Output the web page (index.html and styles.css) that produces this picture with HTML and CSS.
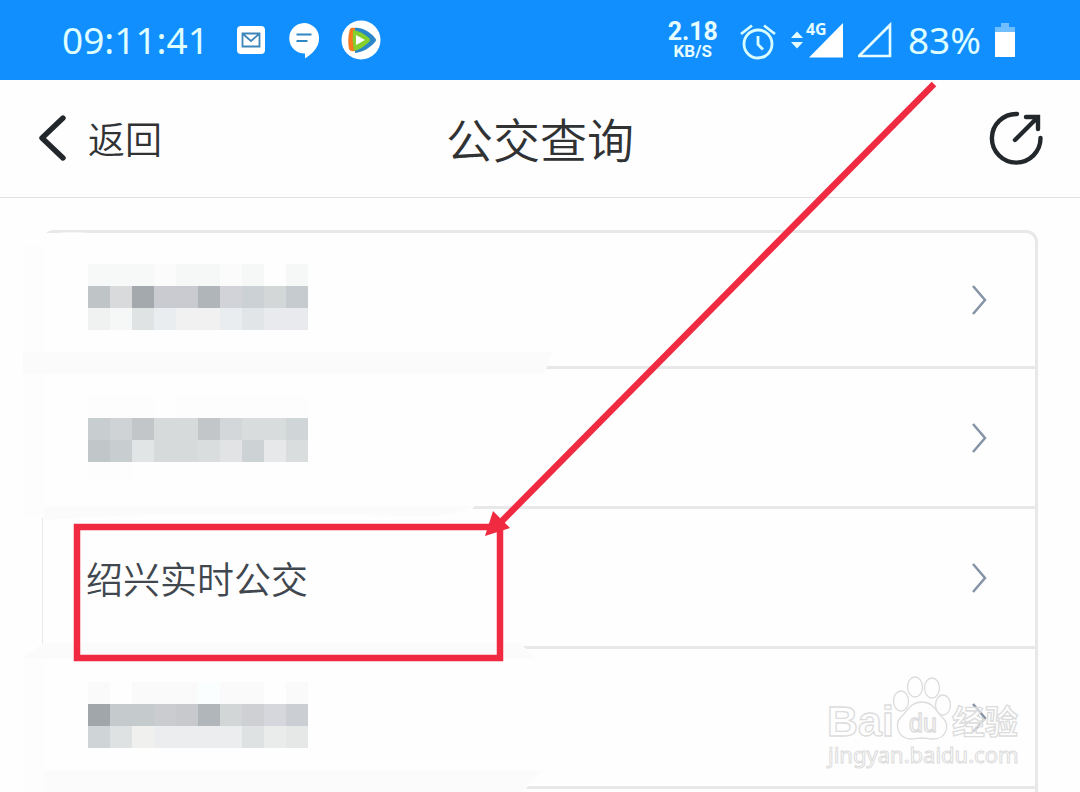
FILE: index.html
```html
<!DOCTYPE html>
<html lang="zh-CN">
<head>
  <meta charset="UTF-8">
  <meta name="viewport" content="width=device-width, initial-scale=1.0">
  <title>公交查询</title>
  <link rel="stylesheet" href="styles.css">
</head>
<body>

  <div class="page">
    <!-- Status bar -->
    <div class="status-bar">
      <div class="status-group">
        <span class="status-text">09:11:41</span>
        <div class="status-icons">
          <svg width="28" height="28" viewBox="0 0 28 28">
            <rect width="28" height="28" rx="4" fill="#fff"/>
            <path d="M5.500 7.500h17v13h-17zM6 8l8 7 8-7" fill="none" stroke="#3f86b8" stroke-width="1.800"/>
          </svg>
          <svg width="32" height="38" viewBox="0 0 32 38">
            <path d="M17 2a15 15 0 0 1 15 15.500c0 8-5 14-14 20V32.500A15 15 0 0 1 17 2z" fill="#fff"/>
            <path d="M9.500 13.500h15M9.500 20h11" stroke="#2f86c4" stroke-width="2.200"/>
          </svg>
          <svg width="40" height="40" viewBox="0 0 40 40">
            <circle cx="20" cy="20" r="19.500" fill="#fff"/>
            <path d="M13 8c8-1 16 4 21 10q2 2 0 4c-5 6-12 10-20 11z" fill="#2a86c6"/>
            <path d="M9 9q1-2 5-1v23q-5 1-6-2-2-10 1-20z" fill="#f47a20"/>
            <path d="M12 10q8 1 16 8 2 2 0 4-7 7-15 9-2-10-1-21z" fill="#84cf2b"/>
            <path d="M15 15l9 5-9 5z" fill="#fff"/>
          </svg>
        </div>
      </div>
      <div class="status-group status-right">
        <div class="speed">
          <span class="speed-value">2.18</span>
          <span class="speed-unit">KB/S</span>
        </div>
        <svg width="36" height="40" viewBox="0 0 36 40" fill="none" stroke="#d8fdff" stroke-width="2.800">
          <circle cx="18" cy="24" r="14"/>
          <path d="M18 16v8.500l5 5M1 14L12 5.500M24 5.500L35 14"/>
        </svg>
        <div class="network">
          <svg width="54" height="40" viewBox="0 0 54 40">
            <path d="M1 18l6-6.500 6 6.500zM1 22h12l-6 6.500z" fill="#e6fdff"/>
            <path d="M19 37.500L53 3v34.500z" fill="#fff"/>
          </svg>
          <span class="network-type">4G</span>
        </div>
        <svg width="36" height="40" viewBox="0 0 36 40">
          <path d="M1 36L32 5v31z" fill="none" stroke="#e6fdff" stroke-width="2.600"/>
        </svg>
        <span class="status-text">83%</span>
        <svg width="20" height="36" viewBox="0 0 20 36">
          <path d="M6 1h8v4h6v5H0V5h6z" fill="#70bdff"/>
          <path d="M0 10h20v25H0z" fill="#fff"/>
        </svg>
      </div>
    </div>

    <!-- Title bar -->
    <header class="header">
      <a class="back" href="#">
        <svg width="30" height="46" viewBox="0 0 30 46">
          <path d="M27 3L6 23l21 20" fill="none" stroke="#22272c" stroke-width="5.400" stroke-linecap="round" stroke-linejoin="round"/>
        </svg>
        返回
      </a>
      <h1>公交查询</h1>
      <button class="share" type="button" aria-label="分享">
        <svg width="56" height="56" viewBox="0 0 56 56" fill="none" stroke="#22272c" stroke-width="4.400" stroke-linecap="round" stroke-linejoin="round">
          <path d="M29 4A24.300 24.300 0 1 0 52.500 28"/>
          <path d="M27 30L49 8M38 7h12v12" stroke-linejoin="miter"/>
        </svg>
      </button>
    </header>

    <!-- Route list -->
    <main class="content">
      <nav class="routes">
        <a class="route" href="#">
          <svg class="mosaic" width="220" height="72" viewBox="0 0 220 72" shape-rendering="crispEdges">
            <path d="M0 0h66v22H0z" fill="#f7f8f8"/>
            <path d="M66 0h22v22H66zM132 0h22v22h-22z" fill="#fbfbfb"/>
            <path d="M88 0h22v22H88z" fill="#f5f8f7"/>
            <path d="M110 0h22v22h-22zM154 0h22v22h-22zM198 0h22v22h-22z" fill="#f6f7f7"/>
            <path d="M0 22h22v22H0z" fill="#bfc4c6"/>
            <path d="M22 22h22v22H22z" fill="#d8dadc"/>
            <path d="M44 22h22v22H44z" fill="#a4a9ad"/>
            <path d="M66 22h44v22H66z" fill="#cacbd0"/>
            <path d="M110 22h22v22h-22z" fill="#afb5b9"/>
            <path d="M132 22h22v22h-22z" fill="#d1d3d8"/>
            <path d="M154 22h22v22h-22z" fill="#cbd1d5"/>
            <path d="M176 22h22v22h-22z" fill="#d4d7d8"/>
            <path d="M198 22h22v22h-22z" fill="#c6cbcf"/>
            <path d="M0 44h22v22H0z" fill="#eff2f1"/>
            <path d="M22 44h22v22H22z" fill="#f6f7f7"/>
            <path d="M44 44h22v22H44z" fill="#e0e3e4"/>
            <path d="M66 44h22v22H66zM132 44h22v22h-22z" fill="#e9edef"/>
            <path d="M88 44h44v22H88z" fill="#f1f1f2"/>
            <path d="M154 44h22v22h-22z" fill="#e2e5e8"/>
            <path d="M176 44h44v22h-44z" fill="#e8eaed"/>
          </svg>
          <svg class="chevron" width="18" height="32" viewBox="0 0 18 32"><path d="M3 2l12 14L3 30"/></svg>
        </a>
        <a class="route" href="#">
          <svg class="mosaic" width="220" height="84" viewBox="0 0 220 84" shape-rendering="crispEdges">
            <path d="M0 0h66v22H0zM88 0h132v22H88zM0 66h44v18H0z" fill="#fdfdfd"/>
            <path d="M0 22h22v22H0z" fill="#c8cdcf"/>
            <path d="M22 22h22v22H22z" fill="#d0d3d6"/>
            <path d="M44 22h22v22H44zM110 22h22v22h-22z" fill="#c2c6c8"/>
            <path d="M66 22h44v44H66z" fill="#d7dadb"/>
            <path d="M132 22h22v22h-22z" fill="#d3d7d9"/>
            <path d="M154 22h44v22h-44z" fill="#d9dcdd"/>
            <path d="M198 22h22v22h-22z" fill="#d0d5d8"/>
            <path d="M0 44h22v22H0z" fill="#c1c6c8"/>
            <path d="M22 44h22v22H22z" fill="#c8cdcf"/>
            <path d="M44 44h22v22H44z" fill="#e2e5e5"/>
            <path d="M110 44h22v22h-22zM198 44h22v22h-22z" fill="#dadddd"/>
            <path d="M132 44h22v22h-22z" fill="#e1e3e4"/>
            <path d="M154 44h22v22h-22z" fill="#cdd3d5"/>
            <path d="M176 44h22v22h-22z" fill="#e6e8e9"/>
          </svg>
          <svg class="chevron" width="18" height="32" viewBox="0 0 18 32"><path d="M3 2l12 14L3 30"/></svg>
        </a>
        <a class="route" href="#">
          <span class="route-name">绍兴实时公交</span>
          <svg class="chevron" width="18" height="32" viewBox="0 0 18 32"><path d="M3 2l12 14L3 30"/></svg>
        </a>
        <a class="route" href="#">
          <svg class="mosaic" width="220" height="72" viewBox="0 0 220 72" shape-rendering="crispEdges">
            <path d="M0 0h22v22H0zM44 0h66v22H44zM132 0h44v22h-44zM198 0h22v22h-22z" fill="#fafafa"/>
            <path d="M110 0h22v22h-22z" fill="#fafefe"/>
            <path d="M0 22h22v22H0z" fill="#a0a6a9"/>
            <path d="M22 22h44v22H22z" fill="#c5cacd"/>
            <path d="M66 22h22v22H66z" fill="#cbccd0"/>
            <path d="M88 22h22v22H88z" fill="#c7c9cc"/>
            <path d="M110 22h22v22h-22z" fill="#b0b6ba"/>
            <path d="M132 22h22v22h-22z" fill="#d3d6d7"/>
            <path d="M154 22h22v22h-22z" fill="#cfd0d4"/>
            <path d="M176 22h22v22h-22z" fill="#d5d7dc"/>
            <path d="M198 22h22v22h-22z" fill="#cbced2"/>
            <path d="M0 44h22v22H0z" fill="#cfd4d7"/>
            <path d="M22 44h22v22H22zM154 44h22v22h-22z" fill="#dfe2e3"/>
            <path d="M44 44h22v22H44z" fill="#f0f1ef"/>
            <path d="M66 44h88v22H66z" fill="#ebedee"/>
            <path d="M176 44h22v22h-22z" fill="#eaecec"/>
            <path d="M198 44h22v22h-22z" fill="#e6e8e8"/>
          </svg>
          <svg class="chevron" width="18" height="32" viewBox="0 0 18 32"><path d="M3 2l12 14L3 30"/></svg>
          <svg class="watermark" width="200" height="100" viewBox="0 0 200 100">
            <g fill="#fefefe" stroke="#dcdcdc" stroke-width="1.300">
              <ellipse cx="76" cy="27" rx="7.500" ry="10"/>
              <ellipse cx="90" cy="13" rx="7.500" ry="10"/>
              <ellipse cx="107" cy="14" rx="7.500" ry="10"/>
              <ellipse cx="118" cy="31" rx="7.500" ry="10"/>
              <path d="M97 28c-12 0-14 9-21 15-7 7-3 22 10 22 5 0 7-1 11-1s6 1 11 1c14 0 17-14 10-21-7-6-9-16-21-16z"/>
              <text class="mark-bai" x="2" y="62">Bai</text>
              <text class="mark-du" x="84" y="58">du</text>
              <text class="mark-cn" x="127" y="60" fill-opacity="0.600">经验</text>
              <text class="mark-url" x="3" y="89" stroke-width="1">jingyan.baidu.com</text>
            </g>
          </svg>
        </a>
      </nav>
    </main>

    <!-- Brushed-out areas -->
    <svg class="notes" width="1080" height="792" viewBox="0 0 1080 792">
      <path d="M22 238l26-5h40l70 9h270l122 110-5 22-70 132-10 10H22z" fill="#fefefe"/>
      <path d="M22 646h496l20 13 6 112-22 21H22z" fill="#fefefe"/>
      <path d="M40 229h8l-4 9q10-8 46-5l-46 10h-4z" fill="#fefefe"/>
      <path d="M23 246h21v110H23zM23 374h21v144H23zM23 660h21v132H23z" fill="#fdfdfd"/>
      <path d="M23 352h529l-8 22H23zM44 506h430q-22 12-60 10-180-4-300 0l-70 4zM24 656l20-13h476l16 16H24zM44 770h499l-22 22H44z" fill="#fbfbfb"/>
    </svg>
    <!-- Highlight box and arrow -->
    <svg class="marks" width="1080" height="792" viewBox="0 0 1080 792">
      <rect x="77" y="527" width="423" height="131" fill="none" stroke="#f02a40" stroke-width="6.500"/>
      <path d="M934 84L500 523" stroke="#f02a40" stroke-width="6.500"/>
      <path d="M485 536l8-25 17 17z" fill="#f02a40"/>
    </svg>
  </div>

</body>
</html>
```
FILE: styles.css
```css
* {
  box-sizing: border-box;
}
body {
  margin: 0;
  font-family: "Noto Sans CJK SC", sans-serif;
  font-weight: 350;
  background-color: #fefefe;
  color: #303234;
}
svg {
  display: block;
  flex: none;
}
a {
  color: inherit;
  text-decoration: none;
}
.page {
  position: relative;
  display: flex;
  flex-direction: column;
  min-height: 100vh;
  overflow: hidden;
}
.status-bar {
  display: flex;
  justify-content: space-between;
  align-items: center;
  height: 80px;
  padding: 0 65px 0 62px;
  background-color: #118fff;
}
.status-group {
  display: flex;
  align-items: center;
  gap: 28px;
}
.status-icons {
  display: flex;
  align-items: center;
  gap: 22px;
}
.status-right {
  gap: 14px;
}
.status-text {
  font-family: "Noto Sans", sans-serif;
  font-size: 37px;
  font-weight: 400;
  line-height: 48px;
  color: #defeff;
}
.speed {
  display: flex;
  flex-direction: column;
  align-items: center;
  margin-right: 8px;
  font-family: Roboto, sans-serif;
  font-weight: 700;
  color: #e6fdff;
}
.speed-value {
  font-size: 25px;
  line-height: 22px;
}
.speed-unit {
  font-size: 17px;
  line-height: 16px;
}
.network {
  position: relative;
}
.network-type {
  position: absolute;
  top: 0;
  left: 16px;
  font-family: "Noto Sans", sans-serif;
  font-size: 16px;
  font-weight: 700;
  line-height: 18px;
  color: #e6fdff;
}
.header {
  display: grid;
  grid-template-columns: 1fr auto 1fr;
  align-items: center;
  height: 118px;
  padding: 0 36px 2px;
  border-bottom: 1px solid #e2e2e2;
}
.back {
  display: flex;
  align-items: center;
  gap: 22px;
  font-size: 37px;
  line-height: 48px;
}
.header h1 {
  margin: 0;
  font-size: 47px;
  font-weight: inherit;
  line-height: 64px;
}
.share {
  justify-self: end;
  padding: 0;
  border: none;
  background: none;
  cursor: pointer;
}
.content {
  flex: 1;
  display: flex;
  padding: 32px 42px 0;
}
.routes {
  flex: 1;
  border: 3px solid #e8e8e8;
  border-left-width: 1px;
  border-bottom: none;
  border-radius: 12px 12px 0 0;
}
.route {
  position: relative;
  display: flex;
  justify-content: space-between;
  align-items: center;
  height: 140px;
  padding: 0 47px 0 43px;
  border-bottom: 3px solid #e8e8e8;
}
.route:first-child {
  height: 136px;
}
.route-name {
  font-size: 37px;
  line-height: 48px;
  color: #40474e;
}
.mosaic {
  position: relative;
  z-index: 2;
  margin-left: 2px;
}
.chevron {
  fill: none;
  stroke: #8493a5;
  stroke-width: 2.5;
}
.watermark {
  position: absolute;
  right: 10px;
  bottom: 12px;
}
.mark-bai {
  font: 700 43px "Liberation Sans", sans-serif;
}
.mark-du {
  font: 400 25px "Liberation Sans", sans-serif;
}
.mark-cn {
  font: 700 33px "Noto Sans CJK SC", sans-serif;
}
.mark-url {
  font: 400 22px "Noto Sans", sans-serif;
}
.notes,
.marks {
  position: absolute;
  top: 0;
  left: 0;
  pointer-events: none;
}
.notes {
  z-index: 1;
}
.marks {
  z-index: 3;
}
```
